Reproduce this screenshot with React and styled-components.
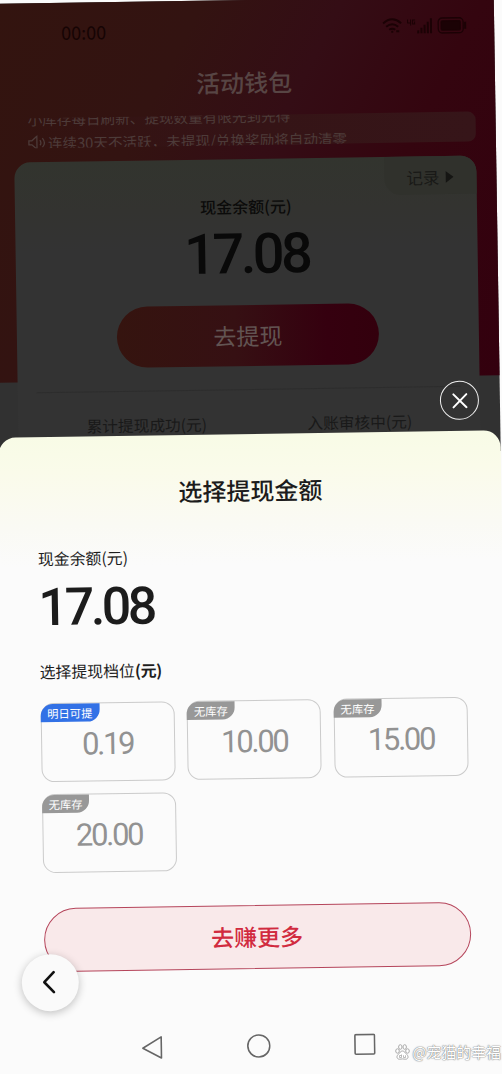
import React from "react";
import styled, { createGlobalStyle } from "styled-components";

const GlobalStyle = createGlobalStyle`
  * {
    box-sizing: border-box;
  }
  body {
    margin: 0;
    overflow: hidden;
    background: #fbfbfb;
    font-family: "Noto Sans CJK SC", "Noto Sans", sans-serif;
  }
`;

const Frame = styled.div`
  position: relative;
  width: 502px;
  height: 1074px;
  overflow: hidden;
`;

// the phone is slightly tilted on the canvas
const Phone = styled.div`
  position: relative;
  width: 502px;
  height: 1094px;
  background: linear-gradient(180deg, #313131 455px, #fbfbfb 455px);
  transform: rotate(-0.88deg);
  transform-origin: 251px 537px;
`;

const Wallet = styled.div`
  height: 379px;
  padding: 0 20px;
  background: linear-gradient(
    118deg,
    #33140f 0%,
    #331311 30%,
    #340d15 50%,
    #34050f 70%,
    #33000e 100%
  );
`;

const StatusBar = styled.div`
  display: flex;
  justify-content: space-between;
  align-items: center;
  height: 58px;
  padding: 0 7px 0 49px;
`;

const Time = styled.span`
  font-size: 18px;
  line-height: 20px;
  color: #160404;
`;

const StatusIcons = styled.div`
  display: flex;
  align-items: center;
  gap: 4px;
  margin-top: -2px;
`;

const PageTitle = styled.h1`
  height: 57px;
  margin: 0;
  font-size: 24px;
  font-weight: 500;
  line-height: 47px;
  text-align: center;
  color: #574544;
`;

const Notice = styled.div`
  height: 30px;
  overflow: hidden;
  border-radius: 8px;
  padding-left: 14px;
  background: linear-gradient(90deg, rgba(60, 28, 26, 0) 0%, #351416 55%, #361519 100%);
  color: #4d3b39;
`;

const NoticeLine = styled.div`
  display: flex;
  align-items: center;
  gap: 2px;
  height: 15px;
  margin-top: ${(props) => props.$offset}px;
  font-size: 14.6px;
  line-height: 15px;
  white-space: nowrap;
`;

const Card = styled.div`
  position: relative;
  display: flex;
  flex-direction: column;
  align-items: center;
  height: 280px;
  margin-top: 14px;
  border-radius: 16px 16px 0 0;
  background: linear-gradient(180deg, #32342e 0%, #333330 50px, #333333 90px);
`;

const RecordBtn = styled.div`
  position: absolute;
  top: 0;
  right: 0;
  display: flex;
  align-items: center;
  gap: 6px;
  width: 92px;
  height: 38px;
  padding: 4px 0 0 22px;
  border-radius: 0 16px 0 16px;
  background: #30312c;
  color: #191917;
  font-size: 16.5px;
`;

const CardLabel = styled.div`
  margin-top: 35px;
  font-size: 16px;
  font-weight: 500;
  line-height: 24px;
  color: #0b0b0a;
`;

const CardAmount = styled.div`
  height: 87px;
  font-family: Roboto, sans-serif;
  font-size: 56px;
  font-weight: 500;
  line-height: 72px;
  letter-spacing: -3.6px;
  color: #090909;
`;

const WithdrawBtn = styled.div`
  flex-shrink: 0;
  width: 262px;
  height: 61px;
  border-radius: 31px;
  background: linear-gradient(90deg, #35140f 0%, #361013 45%, #35000f 80%, #33000d 100%);
  font-size: 23px;
  line-height: 61px;
  text-align: center;
  color: #625452;
`;

const Divider = styled.div`
  width: 424px;
  height: 1px;
  margin-top: 23px;
  background: #2d2d2d;
`;

const Stats = styled.div`
  display: flex;
  width: 100%;
  padding: 21px 14px 0 22px;
`;

const Stat = styled.div`
  flex: 1;
  font-size: 15.7px;
  line-height: 25px;
  text-align: center;
  color: #191919;
`;

const CloseBtn = styled.div`
  position: absolute;
  left: 442px;
  top: 384px;
  display: flex;
  justify-content: center;
  align-items: center;
  width: 39px;
  height: 39px;
  border: 1.5px solid #efefef;
  border-radius: 50%;
`;

const Sheet = styled.div`
  position: absolute;
  left: 0;
  top: 434px;
  display: flex;
  flex-direction: column;
  width: 502px;
  height: 660px;
  padding: 0 37.5px;
  border-radius: 17px 17px 0 0;
  background: linear-gradient(180deg, #f8fbe6 0, #fafbea 35px, #fafaf4 90px, #fbfbfb 130px);
`;

const SheetTitle = styled.h2`
  margin: 38px 0 0;
  font-size: 24px;
  font-weight: 500;
  line-height: 36px;
  text-align: center;
  color: #1c1c1c;
`;

const SheetLabel = styled.div`
  margin-top: ${(props) => props.$top}px;
  font-size: 15.9px;
  line-height: 24px;
  color: #1e1e1e;

  b {
    font-weight: 700;
    letter-spacing: -0.3px;
  }
`;

const SheetAmount = styled.div`
  height: 74px;
  font-family: Roboto, sans-serif;
  font-size: 52px;
  font-weight: 500;
  line-height: 74px;
  letter-spacing: -3.5px;
  color: #1c1c1c;
`;

const Tiers = styled.div`
  display: grid;
  grid-template-columns: repeat(3, 134px);
  grid-auto-rows: 79px;
  column-gap: 12.7px;
  row-gap: 12.5px;
  margin-top: 18.5px;
`;

const Tier = styled.div`
  position: relative;
  border: 1px solid #cbcbcb;
  border-radius: 13px;
  font-family: Roboto, sans-serif;
  font-size: 31px;
  line-height: 81px;
  letter-spacing: -2.3px;
  text-align: center;
  color: #929292;
`;

const Badge = styled.span`
  position: absolute;
  left: -1px;
  top: 0;
  height: 18px;
  padding: 0 7px;
  border-radius: 12px 0 12px 0;
  background: ${(props) => (props.$active ? "#3271e6" : "#989898")};
  font-family: "Noto Sans CJK SC", sans-serif;
  font-size: 11.3px;
  line-height: 18px;
  letter-spacing: 0;
  color: #fff;
`;

const EarnBtn = styled.div`
  height: 64px;
  margin-top: 34.5px;
  border: 1.5px solid #b5455b;
  border-radius: 32px;
  background: #f9e9ea;
  font-size: 23px;
  font-weight: 500;
  line-height: 61px;
  text-align: center;
  color: #d12b3f;
`;

const BackBtn = styled.div`
  position: absolute;
  left: 14.5px;
  top: 950.5px;
  display: flex;
  justify-content: center;
  align-items: center;
  width: 57px;
  height: 57px;
  border-radius: 50%;
  background: #fafafa;
  box-shadow: 0 2px 8px rgba(0, 0, 0, 0.24);
`;

const NavBar = styled.div`
  display: flex;
  justify-content: space-between;
  align-items: center;
  height: 24px;
  margin: 65px 97px 0 95px;
`;

const Watermark = styled.div`
  position: absolute;
  right: 1px;
  bottom: 11px;
  display: flex;
  align-items: center;
  gap: 2px;
  font-size: 14.9px;
  line-height: 22px;
  color: #fff;
  text-shadow: 0 0 1px #777, 0 0 1px #999, 0 0 2px #aaa;
`;

const tiers = [
  { amount: "0.19", label: "明日可提", active: true },
  { amount: "10.00", label: "无库存" },
  { amount: "15.00", label: "无库存" },
  { amount: "20.00", label: "无库存" },
];

const WifiIcon = () => (
  <svg width='20' height='16' viewBox='0 0 20 16' fill='none' stroke='#1b0205' strokeWidth='2'>
    <path d='M1 5.5Q10-2.5 19 5.5M4 9Q10 4 16 9M7 12Q10 9.8 13 12' />
    <path d='M9 14h2M14 13.5h3' />
  </svg>
);

const SignalIcon = () => (
  <svg width='27' height='17' viewBox='0 0 27 17' fill='#1b0205'>
    <path d='M1 2h1v3h2V2h1v6H4V6H1zM6 2h3v1H7v3h1V4h1v3H6z' />
    <path d='M11 13h2v3h-2zM14.2 10.5h2V16h-2zM17.4 7.5h2V16h-2zM20.6 4.5h2V16h-2zM23.8 1h2v15h-2z' />
  </svg>
);

const BatteryIcon = () => (
  <svg width='30' height='17' viewBox='0 0 30 17' fill='none' stroke='#1b0205' strokeWidth='1.3'>
    <rect x='1' y='1' width='25' height='15' rx='4' />
    <rect x='4' y='4' width='19' height='9' rx='1' fill='#1b0205' />
    <path d='M28 5v7' strokeWidth='2' />
  </svg>
);

const SpeakerIcon = () => (
  <svg width='18' height='15' viewBox='0 0 18 15' fill='none' stroke='#4d3b39' strokeWidth='1.3'>
    <path d='M1 5.5h3L9 1v13L4 9.5H1zM12 5q2 3 0 5M14.5 3q4 5 0 9' />
  </svg>
);

const PawIcon = () => (
  <svg width='15' height='16' viewBox='0 0 15 16' fill='#fff' stroke='#aaa' strokeWidth='1'>
    <ellipse cx='2.5' cy='7' rx='1.8' ry='2.2' />
    <ellipse cx='5.3' cy='3' rx='1.7' ry='2.3' />
    <ellipse cx='9.7' cy='3' rx='1.7' ry='2.3' />
    <ellipse cx='12.5' cy='7' rx='1.8' ry='2.2' />
    <path d='M7.5 7C5.5 7 4.8 9 3.2 10.5C.8 12.8 2.3 15.5 4.8 15.2C6.7 14.8 8.3 14.8 10.2 15.2C12.8 15.5 14.2 12.8 11.8 10.5C10.2 9 9.5 7 7.5 7Z' />
    <path d='M6.5 10.5v3h-2v-2h2M8.5 11.3v2.2h2v-2.2' strokeWidth='.8' />
  </svg>
);

const App = () => {
  return (
    <Frame>
      <GlobalStyle />
      <Phone>
        <Wallet>
          <StatusBar>
            <Time>00:00</Time>
            <StatusIcons>
              <WifiIcon />
              <SignalIcon />
              <BatteryIcon />
            </StatusIcons>
          </StatusBar>
          <PageTitle>活动钱包</PageTitle>
          <Notice>
            <NoticeLine $offset={-7}>小库存每日刷新、提现数量有限先到先得</NoticeLine>
            <NoticeLine $offset={9}>
              <SpeakerIcon />
              连续30天不活跃，未提现/兑换奖励将自动清零
            </NoticeLine>
          </Notice>
          <Card>
            <RecordBtn>
              记录
              <svg width='8' height='12' viewBox='0 0 8 12' fill='#151513'>
                <path d='M0 0l8 6-8 6z' />
              </svg>
            </RecordBtn>
            <CardLabel>现金余额(元)</CardLabel>
            <CardAmount>17.08</CardAmount>
            <WithdrawBtn>去提现</WithdrawBtn>
            <Divider />
            <Stats>
              <Stat>累计提现成功(元)</Stat>
              <Stat>入账审核中(元)</Stat>
            </Stats>
          </Card>
        </Wallet>
        <CloseBtn>
          <svg width='16' height='16' viewBox='0 0 16 16' stroke='#fff' strokeWidth='2' strokeLinecap='round'>
            <path d='M1.5 1.5l13 13M14.5 1.5l-13 13' />
          </svg>
        </CloseBtn>
        <Sheet>
          <SheetTitle>选择提现金额</SheetTitle>
          <SheetLabel $top={36}>现金余额(元)</SheetLabel>
          <SheetAmount>17.08</SheetAmount>
          <SheetLabel $top={15}>
            选择提现档位<b>(元)</b>
          </SheetLabel>
          <Tiers>
            {tiers.map((tier) => (
              <Tier key={tier.amount}>
                <Badge $active={tier.active}>{tier.label}</Badge>
                {tier.amount}
              </Tier>
            ))}
          </Tiers>
          <EarnBtn>去赚更多</EarnBtn>
          <NavBar>
            <svg width='23' height='24' viewBox='0 0 23 24' fill='none' stroke='#666' strokeWidth='1.6' strokeLinejoin='round'>
              <path d='M2 12.5L20.5 1.5v21z' />
            </svg>
            <svg width='24' height='24' viewBox='0 0 24 24' fill='none' stroke='#666' strokeWidth='1.6'>
              <circle cx='12' cy='12' r='11' />
            </svg>
            <svg width='22' height='22' viewBox='0 0 22 22' fill='none' stroke='#666' strokeWidth='1.6'>
              <rect x='1.2' y='1.2' width='19.6' height='19.6' rx='1' />
            </svg>
          </NavBar>
        </Sheet>
        <BackBtn>
          <svg width='14' height='24' viewBox='0 0 14 24' fill='none' stroke='#111' strokeWidth='2.6' strokeLinecap='round' strokeLinejoin='round'>
            <path d='M11 2L1.500 12l9.500 10' />
          </svg>
        </BackBtn>
      </Phone>
      <Watermark>
        <PawIcon />
        <span>@宠猫的幸福</span>
      </Watermark>
    </Frame>
  );
};

export default App;
